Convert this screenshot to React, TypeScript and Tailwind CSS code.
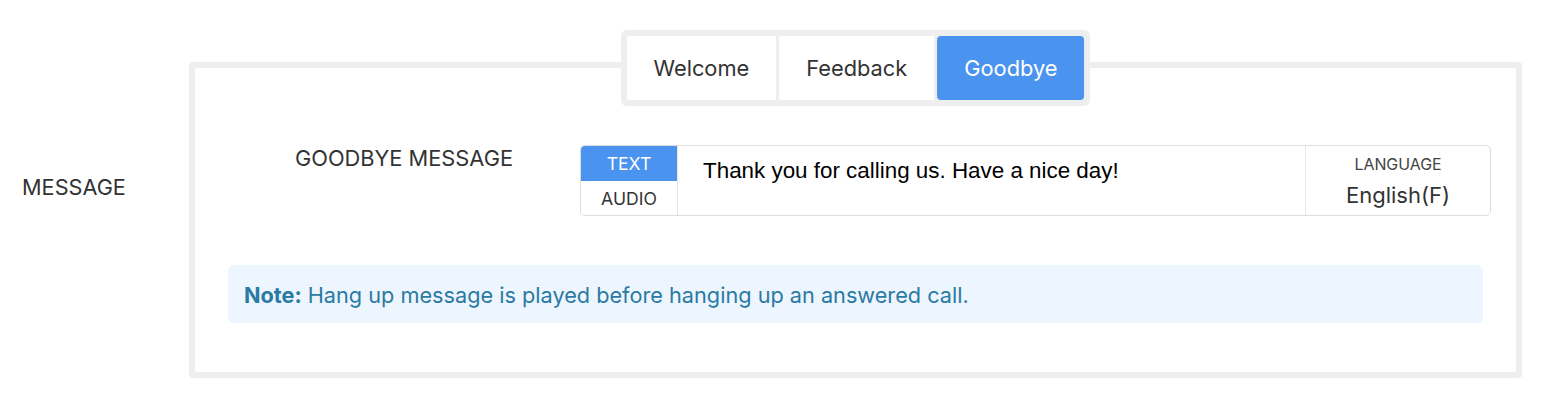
import { useState } from 'react'

const tabs = ['Welcome', 'Feedback', 'Goodbye']

export default function App() {
    const [active, setActive] = useState('Goodbye')
    const [mode, setMode] = useState<'text' | 'audio'>('text')

    return (
        <div className="flex h-[404px] w-[1550px] bg-white font-['Inter',sans-serif] text-[#333]">
            <div className="w-[189px] shrink-0 pl-[22px] pt-[175px] text-[21.7px] leading-6">
                MESSAGE
            </div>

            <div className="relative mt-[62px] h-[316px] w-[1333px] rounded-[4px] border-[6px] border-[#eeeeee] px-[33px] pt-[77px]">
                <div className="absolute left-1/2 top-[-38px] flex -translate-x-1/2 gap-[3px] rounded-[6px] bg-[#eeeeee] p-[6px]">
                    {tabs.map((tab) => (
                        <button
                            key={tab}
                            onClick={() => setActive(tab)}
                            className={
                                tab === active
                                    ? 'h-16 rounded-[4px] bg-[#4a93ee] px-[27px] text-[21.8px] text-white'
                                    : 'h-16 bg-white px-[27px] text-[21.8px] text-[#333]'
                            }
                        >
                            {tab}
                        </button>
                    ))}
                </div>

                <div className="flex">
                    <div className="w-[352px] shrink-0 pt-[1px] text-center text-[21.8px] leading-6">
                        GOODBYE MESSAGE
                    </div>
                    <div className="mr-[-8px] flex h-[71px] flex-1 overflow-hidden rounded-[5px] border border-[#dddddd]">
                        <div className="flex w-[97px] shrink-0 flex-col border-r border-[#e6e6e6] text-[17.6px]">
                            <button
                                onClick={() => setMode('text')}
                                className={
                                    mode === 'text'
                                        ? 'h-[35px] bg-[#4a93ee] pt-[2px] text-white'
                                        : 'h-[35px] bg-white pt-[2px] text-[#333]'
                                }
                            >
                                TEXT
                            </button>
                            <button
                                onClick={() => setMode('audio')}
                                className={
                                    mode === 'audio'
                                        ? 'h-[35px] bg-[#4a93ee] pt-[2px] text-white'
                                        : 'h-[35px] bg-white pt-[2px] text-[#333]'
                                }
                            >
                                AUDIO
                            </button>
                        </div>
                        <div className="flex-1 px-[25px] pt-[13px] font-['Liberation_Sans',sans-serif] text-[22.4px] leading-6 text-black">
                            Thank you for calling us. Have a nice day!
                        </div>
                        <div className="flex w-[185px] shrink-0 flex-col items-center border-l border-[#e6e6e6] pt-[9px]">
                            <div className="text-[15.9px] leading-5 text-[#444]">
                                LANGUAGE
                            </div>
                            <div className="mt-[8px] text-[22px] leading-6 text-[#333]">
                                English(F)
                            </div>
                        </div>
                    </div>
                </div>

                <div className="mt-[49px] flex h-[58px] items-center rounded-[6px] bg-[#edf5fe] px-4 pt-[2px] text-[21.7px] text-[#2a7aa3]">
                    <span className="font-bold">Note:</span>
                    <span className="ml-[6px]">
                        Hang up message is played before hanging up an
                        answered call.
                    </span>
                </div>
            </div>
        </div>
    )
}
